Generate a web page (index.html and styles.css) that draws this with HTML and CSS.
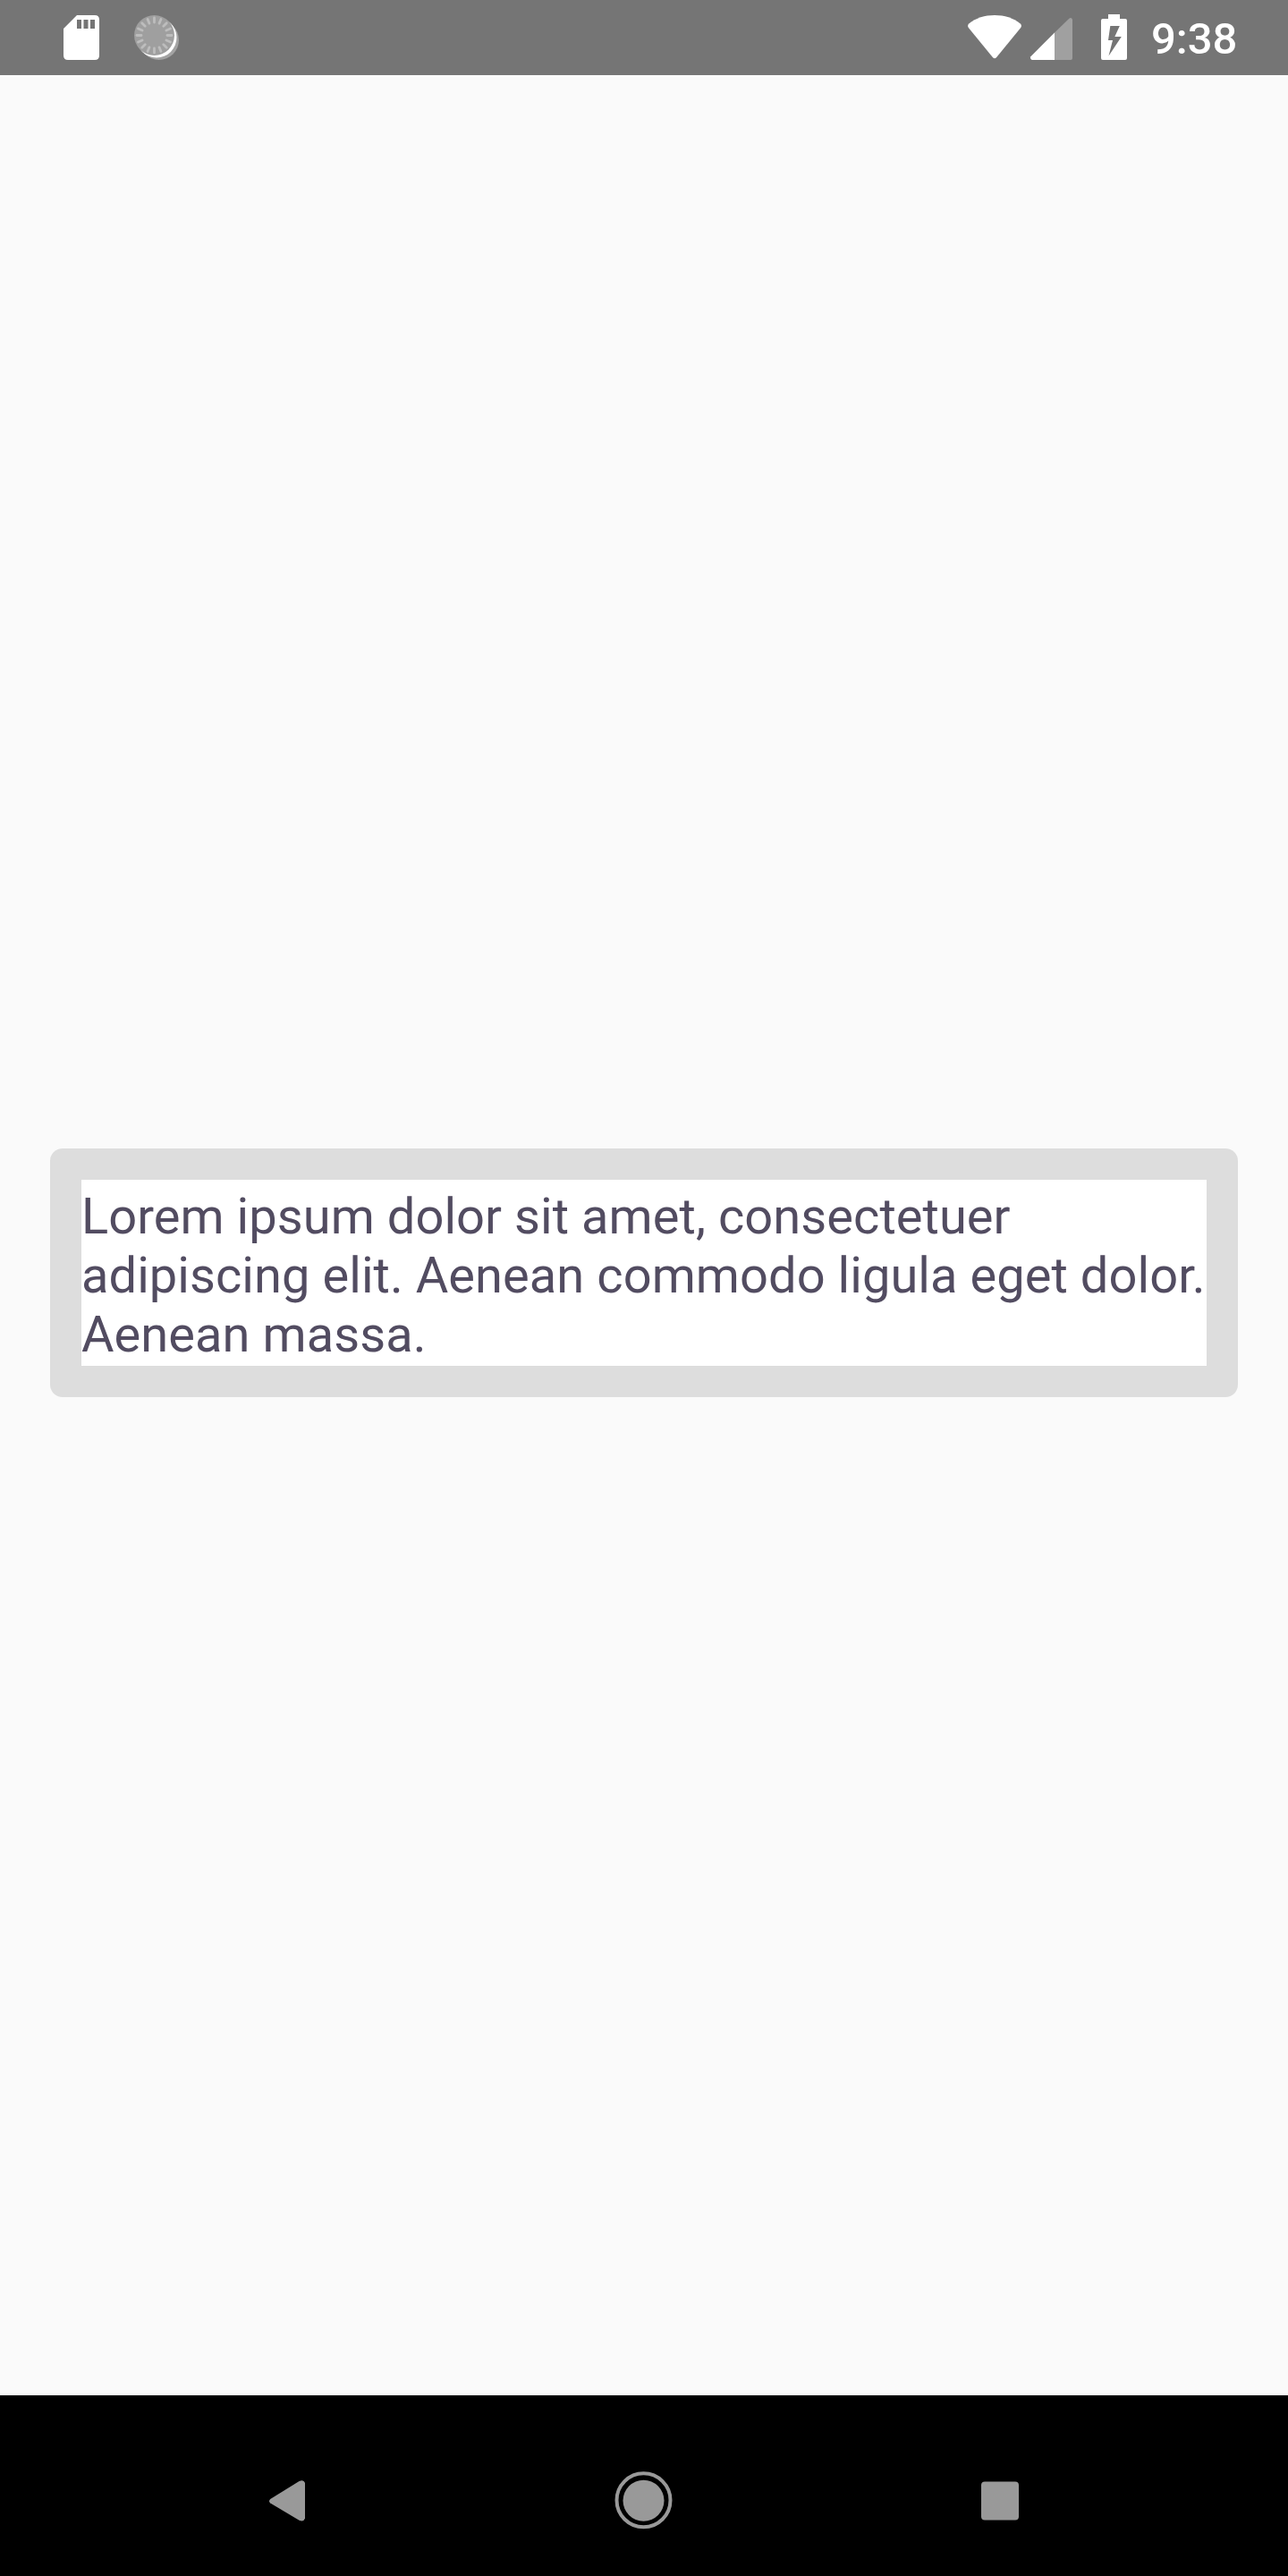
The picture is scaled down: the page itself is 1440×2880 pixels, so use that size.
FILE: index.html
```html
<!DOCTYPE html>
<html lang="la">
<head>
<meta charset="utf-8">
<title>Lorem ipsum</title>
<link rel="stylesheet" href="styles.css">
</head>
<body>
<div class="screen">
  <header class="status">
    <div class="notifications">
      <svg width="40" height="50" viewBox="0 0 40 50" fill="#fff"><path fill-rule="evenodd" d="M15 0H35Q40 0 40 5V45Q40 50 35 50H5Q0 50 0 45V15ZM15 5V15H20V5ZM22.500 5V15H27.500V5ZM30 5V15H35V5Z"/></svg>
      <svg width="50" height="50" viewBox="0 0 50 50"><circle cx="27.700" cy="27.700" r="22.300" fill="#a3a3a3"/><circle cx="25" cy="25" r="22.500" fill="#fff"/><circle cx="22.500" cy="22.500" r="22.500" fill="#9f9f9f"/><g stroke="#bdbdbd" stroke-width="2.800" stroke-linecap="round"><path id="ray" d="M22.500 3V8"/><use href="#ray" transform="rotate(22.500 22.500 22.500)"/><use href="#ray" transform="rotate(45 22.500 22.500)"/><use href="#ray" transform="rotate(67.500 22.500 22.500)"/><use href="#ray" transform="rotate(90 22.500 22.500)"/><use href="#ray" transform="rotate(112.500 22.500 22.500)"/><use href="#ray" transform="rotate(135 22.500 22.500)"/><use href="#ray" transform="rotate(157.500 22.500 22.500)"/><use href="#ray" transform="rotate(180 22.500 22.500)"/><use href="#ray" transform="rotate(202.500 22.500 22.500)"/><use href="#ray" transform="rotate(225 22.500 22.500)"/><use href="#ray" transform="rotate(247.500 22.500 22.500)"/><use href="#ray" transform="rotate(270 22.500 22.500)"/><use href="#ray" transform="rotate(292.500 22.500 22.500)"/><use href="#ray" transform="rotate(315 22.500 22.500)"/><use href="#ray" transform="rotate(337.500 22.500 22.500)"/></g></svg>
    </div>
    <div class="system">
      <svg width="60" height="50" viewBox="0 0 60 50" fill="#fff"><path d="M1.200 9.500C9 3 19 0 30 0S51 3 58.800 9.500Q60.800 11.500 59.200 14L32 47.200Q30 49.400 28 47.200L.8 14Q-.8 11.500 1.200 9.500Z"/></svg>
      <svg class="signal" width="47" height="50" viewBox="0 0 47 50"><path fill="#a0a0a0" d="M27 19.500L43.300 3.700Q46 2 47 5V48Q47 50 45 50H27Z"/><path fill="#fff" d="M27 19.500V50H2Q-.8 49 .3 46.200Z"/></svg>
      <svg class="battery" width="29" height="51" viewBox="0 0 29 51" fill="#fff"><path fill-rule="evenodd" d="M8 0H21V5H27Q29 5 29 7V49Q29 51 27 51H2Q0 51 0 49V7Q0 5 2 5H8ZM10.300 13L8 29H13L8.500 46.500L22.800 25H15.300L20.800 13Z"/></svg>
      <time class="clock">9:38</time>
    </div>
  </header>
  <main class="content">
    <div class="card"><p class="text">Lorem ipsum dolor sit amet, consectetuer<br>adipiscing elit. Aenean commodo ligula eget dolor.<br>Aenean massa.</p></div>
  </main>
  <nav class="nav">
    <svg width="64" height="64" viewBox="0 0 64 64" fill="#999"><path d="M12.200 30L44.500 10.100Q49.500 7.500 51 12V51.500Q49.500 56 44.500 53.700L12.200 34.500Q10 32.200 12.200 30Z"/></svg>
    <svg width="64" height="64" viewBox="0 0 64 64"><circle cx="31.500" cy="31.300" r="30" fill="none" stroke="#999" stroke-width="4"/><circle cx="31.500" cy="31.700" r="23" fill="#999"/></svg>
    <svg width="64" height="64" viewBox="0 0 64 64" fill="#999"><rect x="11" y="10.500" width="42" height="43" rx="4"/></svg>
  </nav>
</div>
</body>
</html>
```
FILE: styles.css
```css
* { box-sizing: border-box; }
body { margin: 0; font-family: Roboto, sans-serif; background: #fafafa; }
svg { display: block; flex: none; overflow: visible; }
.screen { width: 1440px; height: 2880px; display: flex; flex-direction: column; }
.status { height: 84px; flex: none; display: flex; justify-content: space-between; padding: 0 57px 0 71px; background: #757575; }
.notifications { display: flex; gap: 39px; padding-top: 17px; }
.system { display: flex; align-items: flex-start; padding-top: 17px; }
.signal { margin-left: 10px; }
.battery { margin: -1px 0 0 32px; }
.clock { margin-left: 27px; width: 96px; padding-top: 2px; font-size: 49px; line-height: 50px; font-weight: 500; color: #fff; white-space: nowrap; }
.content { flex: 1; padding: 1200px 56px 0; }
.card { height: 278px; padding: 35px; border-radius: 14px; background: #ddd; }
.text { margin: 0; height: 208px; padding-top: 8px; background: #fff; color: #524c61; font-size: 56px; line-height: 66px; letter-spacing: 0.06px; white-space: nowrap; }
.nav { height: 202px; flex: none; display: flex; justify-content: space-between; padding: 86px 290px 0; background: #000; }
```
